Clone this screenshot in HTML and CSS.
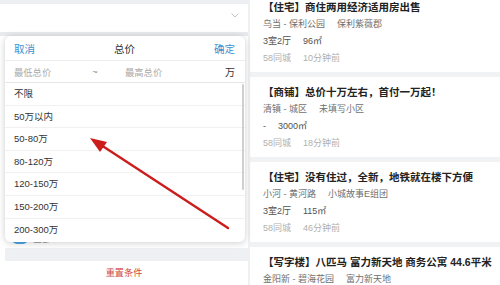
FILE: index.html
```html
<!DOCTYPE html>
<html lang="zh-CN">
<head>
  <meta charset="UTF-8">
  <meta name="viewport" content="width=device-width, initial-scale=1.0">
  <title>房源筛选</title>
  <link rel="stylesheet" href="styles.css">
</head>
<body>
  <div class="page">
    <aside class="filter">
      <div class="filter-top"></div>
      <div class="select-row">
        <svg class="chevron" width="8" height="5" viewBox="0 0 8 5"><path d="M0.5 0.5 L4 4 L7.5 0.5" fill="none" stroke="#c4c4c4" stroke-width="1"/></svg>
      </div>
      <div class="filter-body">
        <div class="opt-row"><span class="opt-icon"></span><span class="opt-text">全部</span></div>
      </div>
      <div class="filter-gap"></div>
      <div class="reset">重置条件</div>

      <div class="popup">
        <div class="popup-head">
          <span class="link">取消</span>
          <span class="head-title">总价</span>
          <span class="link">确定</span>
        </div>
        <div class="range">
          <span class="range-min">最低总价</span>
          <span class="range-tilde">~</span>
          <span class="range-max">最高总价</span>
          <span class="range-unit">万</span>
        </div>
        <ul class="options">
          <li>不限</li>
          <li>50万以内</li>
          <li>50-80万</li>
          <li>80-120万</li>
          <li>120-150万</li>
          <li>150-200万</li>
          <li>200-300万</li>
        </ul>
        <div class="scroll-thumb"></div>
      </div>
    </aside>

    <main class="listings">
      <div class="card">
        <div class="card-title">【住宅】商住两用经济适用房出售</div>
        <div class="card-line"><span>乌当 - 保利公园</span><span>保利紫薇郡</span></div>
        <div class="card-line dark"><span>3室2厅</span><span>96㎡</span></div>
        <div class="card-line light"><span>58同城</span><span>10分钟前</span></div>
      </div>
      <div class="card">
        <div class="card-title">【商铺】总价十万左右，首付一万起！</div>
        <div class="card-line"><span>清镇 - 城区</span><span>未填写小区</span></div>
        <div class="card-line dark"><span>-</span><span>3000㎡</span></div>
        <div class="card-line light"><span>58同城</span><span>18分钟前</span></div>
      </div>
      <div class="card">
        <div class="card-title">【住宅】没有住过，全新，地铁就在楼下方便</div>
        <div class="card-line"><span>小河 - 黄河路</span><span>小城故事E组团</span></div>
        <div class="card-line dark"><span>3室2厅</span><span>115㎡</span></div>
        <div class="card-line light"><span>58同城</span><span>46分钟前</span></div>
      </div>
      <div class="card">
        <div class="card-title">【写字楼】八匹马 富力新天地 商务公寓 44.6平米</div>
        <div class="card-line"><span>金阳新 - 碧海花园</span><span>富力新天地</span></div>
      </div>
    </main>

    <svg class="arrow" width="500" height="285" viewBox="0 0 500 285">
      <line x1="228" y1="228" x2="101" y2="145" stroke="#cc1d1d" stroke-width="2.4" stroke-linecap="round"/>
      <polygon points="90,138 107,142 100,152" fill="#cc1d1d"/>
    </svg>
  </div>
</body>
</html>
```

FILE: styles.css
```css
*, *::before, *::after { box-sizing: border-box; }
html, body {
  margin: 0;
  padding: 0;
  width: 500px;
  height: 285px;
  overflow: hidden;
  background: white;
  font-family: 'Liberation Sans', 'Noto Sans CJK SC', sans-serif;
}
.page {
  position: relative;
  display: flex;
  width: 500px;
  height: 285px;
  overflow: hidden;
}

/* 左侧筛选 */
.filter {
  position: relative;
  width: 248px;
  flex: none;
  display: flex;
  flex-direction: column;
  background: white;
}
.filter-top {
  height: 4px;
  background: #eceef1;
}
.select-row {
  height: 32px;
  display: flex;
  justify-content: flex-end;
  align-items: center;
  padding: 0 9px 4px 0;
  border-bottom: 4px solid #e8eaed;
}
.chevron { display: block; }
.filter-body {
  height: 216px;
  display: flex;
  flex-direction: column;
  justify-content: flex-end;
}
.opt-row {
  height: 20px;
  display: flex;
  align-items: center;
  gap: 5px;
  padding-left: 12px;
}
.opt-icon {
  width: 16px;
  height: 12px;
  border-radius: 5px;
  background: #4ba5e0;
}
.opt-text {
  font-size: 9px;
  color: #999;
}
.filter-gap {
  height: 13px;
  margin-left: 5px;
  background: #eef0f3;
}
.reset {
  height: 24px;
  line-height: 24px;
  text-align: center;
  font-size: 9.2px;
  color: #cf4a3c;
}

/* 总价弹层 */
.popup {
  position: absolute;
  top: 36px;
  left: 5px;
  width: 240px;
  height: 206px;
  background: white;
  border-radius: 6px;
  box-shadow: 0 1px 7px rgba(0, 0, 0, 0.2);
  overflow: hidden;
}
.popup-head {
  height: 25px;
  display: flex;
  justify-content: space-between;
  align-items: center;
  padding: 0 10px 0 9px;
  border-bottom: 1px solid #ededed;
  font-size: 10.5px;
}
.link { color: #3b8fd0; }
.head-title { color: #333; }
.range {
  height: 22px;
  display: flex;
  align-items: center;
  padding: 0 10px 0 9px;
  border-bottom: 1px solid #e6e6e6;
  font-size: 9.3px;
  color: #aaa;
}
.range-min { width: 75px; }
.range-tilde { width: 12px; text-align: center; color: #888; }
.range-max { flex: 1; padding-left: 24px; }
.range-unit { color: #333; font-size: 10px; }
.options {
  list-style: none;
  margin: 0;
  padding: 0;
}
.options li {
  height: 22.6px;
  line-height: 22px;
  padding-left: 9px;
  border-bottom: 1px solid #f1f1f1;
  font-size: 9.5px;
  color: #333;
}
.options li:last-child { border-bottom: none; }
.scroll-thumb {
  position: absolute;
  top: 48px;
  right: 1px;
  width: 2px;
  height: 106px;
  border-radius: 1px;
  background: #cfcfcf;
}

/* 右侧列表 */
.listings {
  flex: 1;
  min-width: 0;
  margin-top: -8px;
  border-left: 2px solid #eef0f2;
  background: #f1f2f4;
}
.card {
  background: white;
  padding: 6.5px 8px 5.5px 13px;
  margin-bottom: 5px;
}
.card-title {
  height: 17px;
  line-height: 17px;
  font-size: 10.5px;
  font-weight: bold;
  color: #222;
  white-space: nowrap;
}
.card-line {
  height: 17px;
  line-height: 17px;
  font-size: 9px;
  color: #707070;
  white-space: nowrap;
}
.card-line span + span { margin-left: 12px; }
.card-line.dark { color: #505050; }
.card-line.light { color: #b0b0b0; }

/* 标注箭头 */
.arrow {
  position: absolute;
  top: 0;
  left: 0;
  pointer-events: none;
}
```
